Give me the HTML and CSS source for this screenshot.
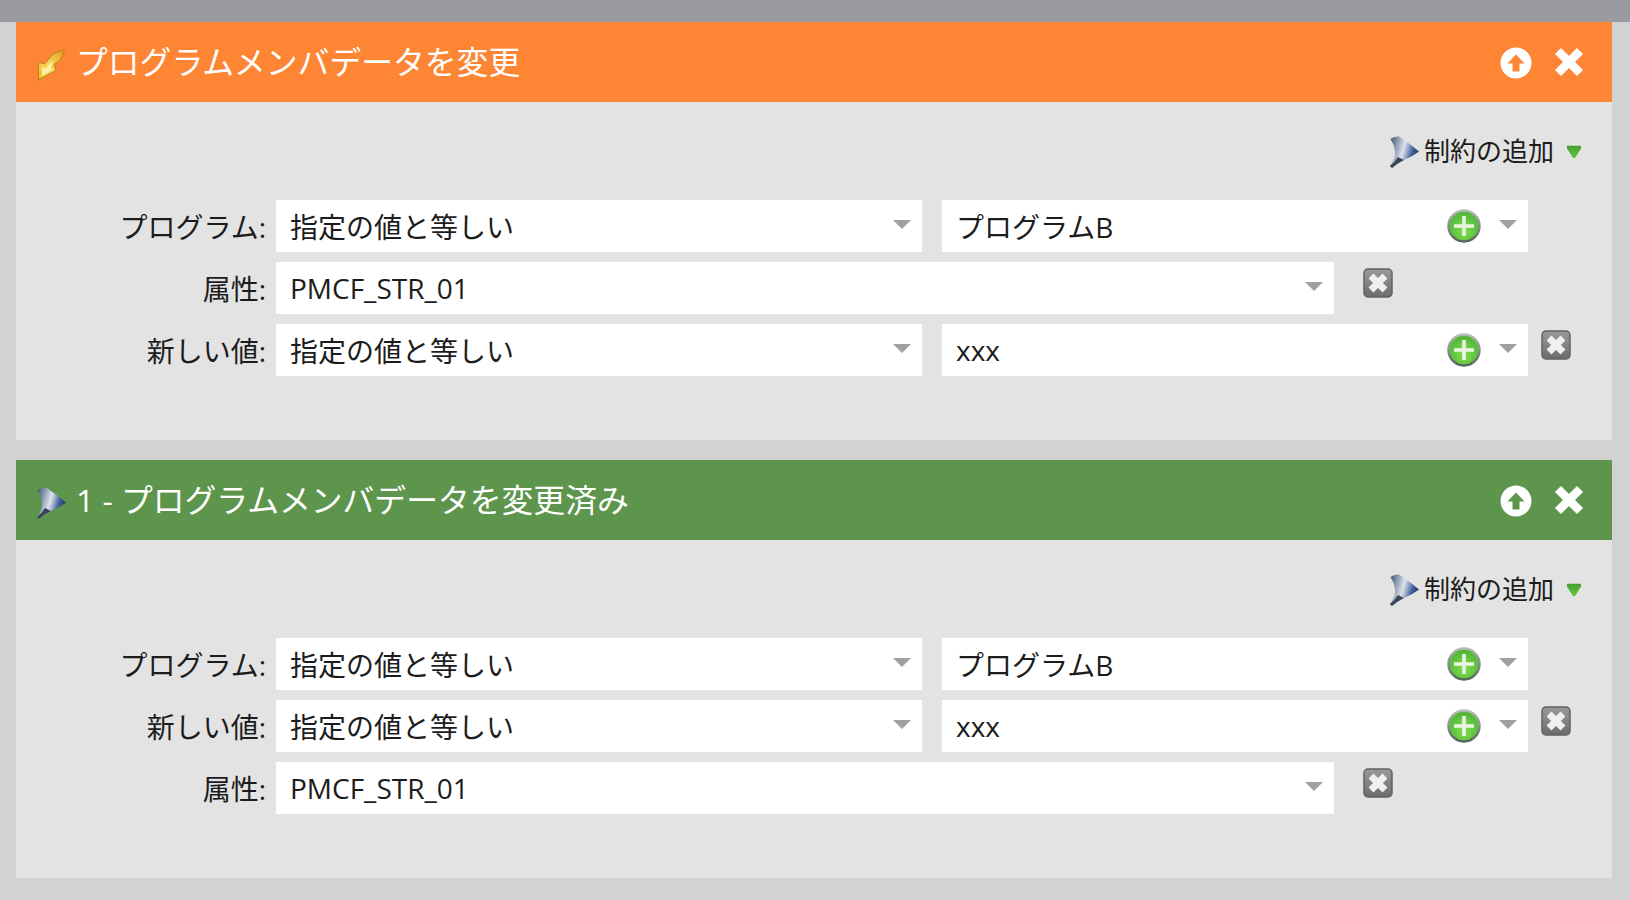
FILE: index.html
```html
<!DOCTYPE html>
<html lang="ja">

<head>
    <meta charset="UTF-8">
    <meta name="viewport" content="width=device-width, initial-scale=1.0">
    <title>プログラムメンバデータを変更</title>
    <link rel="stylesheet" href="styles.css">
</head>

<body>

    <svg class="defs" width="0" height="0" aria-hidden="true">
        <defs>
            <linearGradient id="funnelFill" x1="0" y1="0.2" x2="1" y2="0.5">
                <stop offset="0" stop-color="#4d5b72"/>
                <stop offset="0.25" stop-color="#93a3b8"/>
                <stop offset="0.48" stop-color="#dde3eb"/>
                <stop offset="0.78" stop-color="#40629c"/>
                <stop offset="1" stop-color="#1f335e"/>
            </linearGradient>
            <linearGradient id="boltFill" x1="1" y1="0" x2="0" y2="1">
                <stop offset="0" stop-color="#e29a1c"/>
                <stop offset="0.55" stop-color="#f7d558"/>
                <stop offset="1" stop-color="#efbb2e"/>
            </linearGradient>
            <radialGradient id="plusFill" cx="0.5" cy="0.65" r="0.6">
                <stop offset="0" stop-color="#7ede4e"/>
                <stop offset="1" stop-color="#52b437"/>
            </radialGradient>
            <linearGradient id="plusRing" x1="0" y1="0" x2="0" y2="1">
                <stop offset="0" stop-color="#b4bdb4"/>
                <stop offset="1" stop-color="#55675a"/>
            </linearGradient>
            <linearGradient id="removeFill" x1="0" y1="0" x2="0" y2="1">
                <stop offset="0" stop-color="#9a9a9a"/>
                <stop offset="1" stop-color="#6c6c6c"/>
            </linearGradient>
            <symbol id="funnel" viewBox="0 0 30 32">
                <path d="M1.5 3 Q5 0 10 .5 Q20 7 30 15.5 Q23 21 15 24 Q9 27 3 32 L1 30 Q7 22 6 15 Q5 8 1.5 3Z" fill="url(#funnelFill)"/>
                <path d="M1 30 Q6 26 9 21 L15 24 Q9 27 3 32Z" fill="#3a4658"/>
            </symbol>
            <symbol id="bolt" viewBox="0 0 30 32">
                <path d="M2.5 31 L2.5 13 L8.5 15 L17 5 L28.5 .5 L25 10.5 L18 15.5 L20 21.5 Z" fill="url(#boltFill)" stroke="#b9831c" stroke-width="1"/>
                <path d="M6 27 L6 18 L10 19 L17 11 L15 18 L16 21 Z" fill="#fdf0a4"/>
            </symbol>
            <symbol id="plus" viewBox="0 0 34 34">
                <circle cx="17" cy="17" r="15.5" fill="url(#plusFill)" stroke="url(#plusRing)" stroke-width="2.5"/>
                <path d="M17 7V27M7 17H27" stroke="#e9f6e2" stroke-width="3.6"/>
            </symbol>
            <symbol id="remove" viewBox="0 0 30 30">
                <rect x="1" y="1" width="28" height="28" rx="4" fill="url(#removeFill)" stroke="#626262" stroke-width="1.5"/>
                <path d="M8 8L22 22M22 8L8 22" stroke="#f0f0f0" stroke-width="7"/>
            </symbol>
        </defs>
    </svg>

    <div class="topbar"></div>

    <div class="panel">
        <div class="panel-head orange">
            <svg class="head-icon"><use href="#bolt"/></svg>
            <span class="panel-title">プログラムメンバデータを変更</span>
            <svg class="head-btn" viewBox="0 0 32 32"><circle cx="16" cy="16" r="15.5" fill="#fff"/><path d="M16 7.5L24.5 16.5H19.5V24.5H12.5V16.5H7.5Z" class="arrow-up"/></svg>
            <svg class="head-close" viewBox="0 0 30 30"><path d="M4 4L26 26M26 4L4 26" stroke="#fff" stroke-width="8.5"/></svg>
        </div>
        <div class="panel-body">
            <div class="add-rule">
                <svg class="funnel-icon"><use href="#funnel"/></svg>
                <span>制約の追加</span>
                <span class="green-arrow"></span>
            </div>
            <div class="row">
                <label>プログラム:</label>
                <div class="field"><span class="value">指定の値と等しい</span><span class="caret"></span></div>
                <div class="field wide"><span class="value">プログラムB</span><svg class="plus"><use href="#plus"/></svg><span class="caret"></span></div>
            </div>
            <div class="row">
                <label>属性:</label>
                <div class="field long"><span class="value">PMCF_STR_01</span><span class="caret"></span></div>
                <svg class="remove remove-long"><use href="#remove"/></svg>
            </div>
            <div class="row">
                <label>新しい値:</label>
                <div class="field"><span class="value">指定の値と等しい</span><span class="caret"></span></div>
                <div class="field wide"><span class="value">xxx</span><svg class="plus"><use href="#plus"/></svg><span class="caret"></span></div>
                <svg class="remove"><use href="#remove"/></svg>
            </div>
        </div>
    </div>

    <div class="panel">
        <div class="panel-head green">
            <svg class="head-icon"><use href="#funnel"/></svg>
            <span class="panel-title">1 - プログラムメンバデータを変更済み</span>
            <svg class="head-btn" viewBox="0 0 32 32"><circle cx="16" cy="16" r="15.5" fill="#fff"/><path d="M16 7.5L24.5 16.5H19.5V24.5H12.5V16.5H7.5Z" class="arrow-up-green"/></svg>
            <svg class="head-close" viewBox="0 0 30 30"><path d="M4 4L26 26M26 4L4 26" stroke="#fff" stroke-width="8.5"/></svg>
        </div>
        <div class="panel-body">
            <div class="add-rule">
                <svg class="funnel-icon"><use href="#funnel"/></svg>
                <span>制約の追加</span>
                <span class="green-arrow"></span>
            </div>
            <div class="row">
                <label>プログラム:</label>
                <div class="field"><span class="value">指定の値と等しい</span><span class="caret"></span></div>
                <div class="field wide"><span class="value">プログラムB</span><svg class="plus"><use href="#plus"/></svg><span class="caret"></span></div>
            </div>
            <div class="row">
                <label>新しい値:</label>
                <div class="field"><span class="value">指定の値と等しい</span><span class="caret"></span></div>
                <div class="field wide"><span class="value">xxx</span><svg class="plus"><use href="#plus"/></svg><span class="caret"></span></div>
                <svg class="remove"><use href="#remove"/></svg>
            </div>
            <div class="row">
                <label>属性:</label>
                <div class="field long"><span class="value">PMCF_STR_01</span><span class="caret"></span></div>
                <svg class="remove remove-long"><use href="#remove"/></svg>
            </div>
        </div>
    </div>

</body>

</html>
```

FILE: styles.css
```css
html {
    background-color: #d2d2d2;
}

body {
    margin: 0;
    padding: 0;
    height: 900px;
    overflow: hidden;
    font-family: 'Open Sans', 'Noto Sans CJK JP', sans-serif;
    color: #1c1c1c;
}

.defs {
    position: absolute;
}

.topbar {
    height: 22px;
    background-color: #9b9aa0;
}

.panel {
    margin: 0 18px 20px 16px;
    background-color: #e3e3e3;
}

.panel-head {
    display: flex;
    align-items: center;
    height: 80px;
    padding: 0 28px 0 20px;
    color: #fff;
}

.orange {
    background-color: #fd8534;
}

.green {
    background-color: #5c954b;
}

.head-icon {
    width: 30px;
    height: 32px;
    margin-top: 6px;
    filter: blur(0.6px);
}

.panel-title {
    flex: 1;
    margin-left: 10px;
    font-size: 31.8px;
    line-height: 40px;
}

.head-btn {
    width: 32px;
    height: 32px;
    margin-top: 2px;
}

.arrow-up {
    fill: #fd8534;
}

.arrow-up-green {
    fill: #5c954b;
}

.head-close {
    width: 30px;
    height: 30px;
    margin-left: 22px;
    filter: blur(0.3px);
}

.panel-body {
    height: 338px;
    padding-top: 29px;
    box-sizing: border-box;
}

.add-rule {
    display: flex;
    align-items: center;
    justify-content: flex-end;
    height: 38px;
    margin-bottom: 31px;
    padding-right: 31px;
    font-size: 26px;
}

.funnel-icon {
    width: 30px;
    height: 32px;
    margin-right: 5px;
    margin-top: 3px;
    filter: blur(0.6px);
}

.green-arrow {
    width: 14px;
    height: 14px;
    margin-left: 13px;
    margin-top: 2px;
    background: linear-gradient(#3f9a2a, #66c444);
    clip-path: polygon(0 12%, 100% 12%, 100% 32%, 58% 100%, 42% 100%, 0 32%);
    filter: blur(0.4px);
}

.row {
    display: flex;
    align-items: flex-start;
    margin-bottom: 10px;
}

.row label {
    width: 250px;
    height: 52px;
    line-height: 54px;
    font-size: 28px;
    text-align: right;
}

.field {
    display: flex;
    align-items: center;
    width: 646px;
    height: 52px;
    margin-left: 10px;
    padding: 0 11px 0 14px;
    box-sizing: border-box;
    background-color: #fff;
    font-size: 28px;
}

.field.wide {
    width: 586px;
    margin-left: 20px;
}

.field.long {
    width: 1058px;
}

.value {
    flex: 1;
}

.caret {
    width: 18px;
    height: 9px;
    margin-bottom: 3px;
    background-color: #a0a0a0;
    clip-path: polygon(0 0, 100% 0, 50% 100%);
}

.plus {
    width: 34px;
    height: 34px;
    margin-right: 18px;
    filter: blur(0.5px);
}

.remove {
    width: 30px;
    height: 30px;
    margin: 6px 0 0 13px;
    filter: blur(0.5px);
}

.remove-long {
    margin-left: 29px;
}
```
